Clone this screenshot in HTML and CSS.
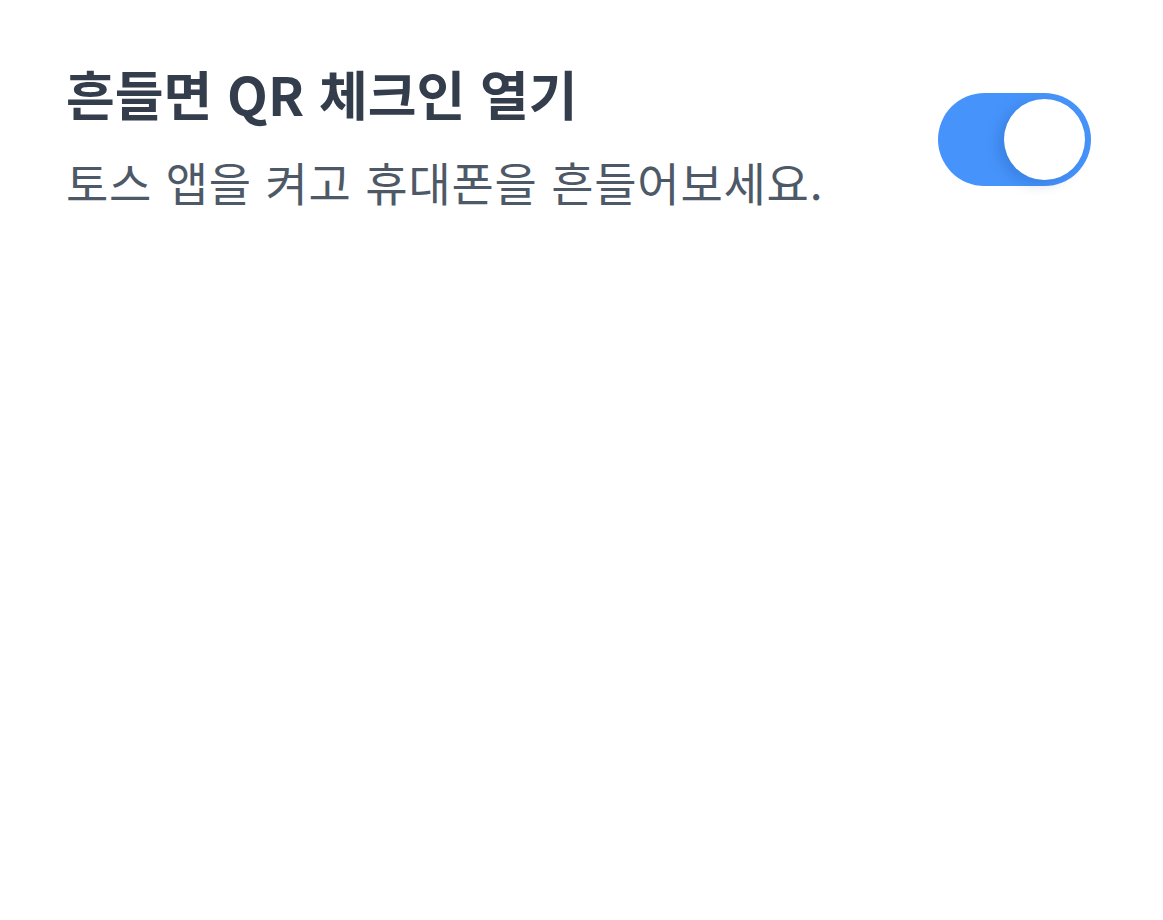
FILE: index.html
```html
<!DOCTYPE html>
<html lang="ko">
<head>
<meta charset="utf-8">
<link rel="stylesheet" href="styles.css">
</head>
<body>
<div class="row">
  <div class="text">
    <div class="title">흔들면 QR 체크인 열기</div>
    <div class="desc">토스 앱을 켜고 휴대폰을 흔들어보세요.</div>
  </div>
  <div class="switch"><div class="knob"></div></div>
</div>
</body>
</html>
```
FILE: styles.css
```css
html, body { margin: 0; padding: 0; background: #fff; }
body { font-family: "Noto Sans CJK KR", "Noto Sans", sans-serif; }
.row {
  display: flex;
  align-items: center;
  justify-content: space-between;
  padding: 60px 72px 0 66px;
}
.text { display: flex; flex-direction: column; gap: 26px; }
.title {
  font-size: 53px;
  font-weight: 700;
  color: #333d4b;
  line-height: 1.25;
}
.desc {
  font-size: 46px;
  font-weight: 400;
  color: #4e5968;
  line-height: 1.3;
  letter-spacing: 0.75px;
}
.switch {
  width: 153px;
  height: 93px;
  margin-top: 6px;
  border-radius: 47px;
  background: #4694fb;
  box-sizing: border-box;
  padding: 6px;
  display: flex;
  justify-content: flex-end;
}
.knob {
  width: 81px;
  height: 81px;
  border-radius: 50%;
  background: #fff;
  box-shadow: -6px 4px 14px rgba(0, 40, 120, 0.18);
}
```
